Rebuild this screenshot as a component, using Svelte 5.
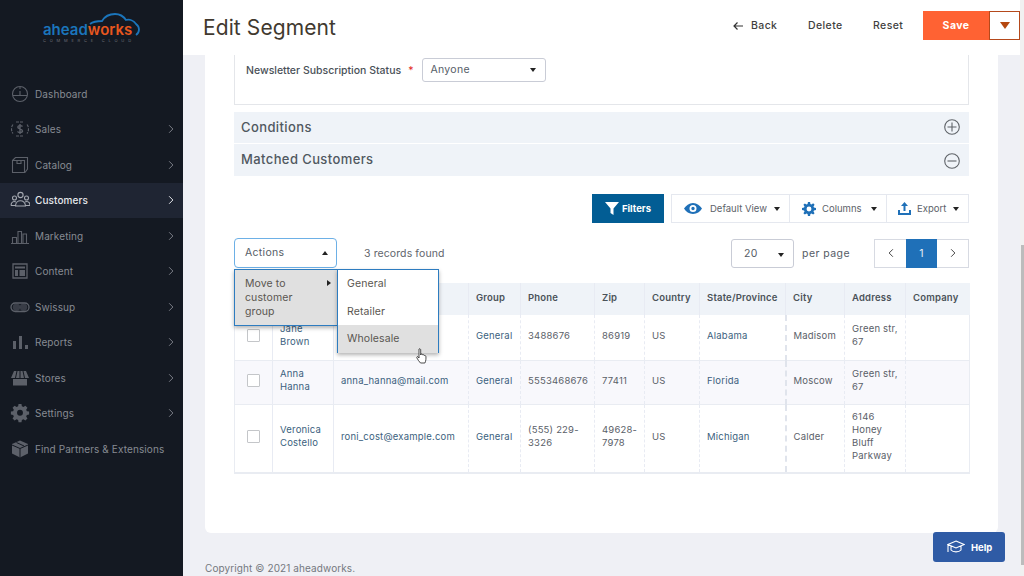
<script>
  const menu = [
    { name: 'Dashboard', icon: 'dash' },
    { name: 'Sales', icon: 'sales', more: true },
    { name: 'Catalog', icon: 'box', more: true },
    { name: 'Customers', icon: 'people', more: true, active: true },
    { name: 'Marketing', icon: 'bars', more: true },
    { name: 'Content', icon: 'content', more: true },
    { name: 'Swissup', icon: 'swiss', more: true },
    { name: 'Reports', icon: 'reports', more: true },
    { name: 'Stores', icon: 'store', more: true },
    { name: 'Settings', icon: 'gear', more: true },
    { name: 'Find Partners & Extensions', icon: 'brick' }
  ];

  const heads = ['', 'Name', 'Email', 'Group', 'Phone', 'Zip', 'Country', 'State/Province', 'City', 'Address', 'Company'];

  const rows = [
    { name: 'Jane Brown', email: '', phone: '3488676', zip: '86919', state: 'Alabama', city: 'Madisom', address: 'Green str, 67' },
    { name: 'Anna Hanna', email: 'anna_hanna@mail.com', phone: '5553468676', zip: '77411', state: 'Florida', city: 'Moscow', address: 'Green str, 67' },
    { name: 'Veronica Costello', email: 'roni_cost@example.com', phone: '(555) 229-3326', zip: '49628-7978', state: 'Michigan', city: 'Calder', address: '6146 Honey Bluff Parkway' }
  ];
</script>

{#snippet chevron(dir)}
  <svg class="chev" width="6" height="10" viewBox="0 0 8 12">
    <path d={dir === 'left' ? 'M6.500 1 1.500 6l5 5' : 'M1.500 1l5 5-5 5'} fill="none" stroke="currentColor" stroke-width="1.300" />
  </svg>
{/snippet}

{#snippet navIcon(kind)}
  <svg class="nav-icon" width="20" height="20" viewBox="0 0 20 20" fill="none" stroke="currentColor" stroke-width="1.100">
    {#if kind === 'dash'}
      <circle cx="10" cy="10" r="7.500" />
      <path d="M2.800 11.500h14.400M10 3v2M10 7v5" />
    {:else if kind === 'sales'}
      <path d="M3 5.500C1 8 1 12 3 14.500M17 5.500c2 2.500 2 6.500 0 9M6 3h8M6 17h8" stroke-dasharray="3 1" />
      <path d="M12.500 7.500C12 6.500 8 6 7.800 8c-.2 2.200 4.700 1.500 4.700 4 0 2-4.200 1.800-5 .5M10 5v10" stroke-width="1.400" />
    {:else if kind === 'box'}
      <path d="M2.500 5.500h12v12h-12zM2.500 5.500l3-3h12v11.500l-2.500 3.500M7 5.500v3h4v-3" />
    {:else if kind === 'people'}
      <circle cx="10.500" cy="5" r="2.600" />
      <circle cx="4.500" cy="8" r="2" />
      <circle cx="16.500" cy="8" r="2" />
      <path d="M5.500 16c0-7 10-7 10 0zM1 15.500c0-4 3-4.500 5-3.500M20 15.500c0-4-3-4.500-5-3.500M1 15.500h4.500M15.500 15.500H20" />
    {:else if kind === 'bars'}
      <path d="M1 17.500h18M2.500 17v-5.500h4V17M8 17V5.500h3.500V17M13 17V8h3.500v9" />
    {:else if kind === 'content'}
      <path d="M3 3h14v14H3z" stroke-width="1.300" />
      <path d="M5 5.500h10v2H5zM5 9h3v6H5zM9.500 9H15v6H9.500z" fill="currentColor" stroke="none" />
    {:else if kind === 'swiss'}
      <rect x="1" y="6" width="18" height="8.500" rx="4.200" stroke-width="1.300" />
      <circle cx="6.500" cy="10.200" r="3.700" fill="currentColor" fill-opacity="0.5" stroke="none" />
      <circle cx="13.500" cy="10.200" r="3.700" fill="currentColor" fill-opacity="0.5" stroke="none" />
    {:else if kind === 'reports'}
      <path d="M3 9h3v8H3zM9 4h3v13H9zM15 13h3v4h-3z" fill="currentColor" stroke="none" />
    {:else if kind === 'store'}
      <path d="M4 3h12l3 7H1zM3 11h14v6.500H3z" fill="currentColor" stroke="none" />
      <path d="M7 3 5.500 10M10 3v7M13 3l1.500 7" stroke="#141922" stroke-width="1" />
    {:else if kind === 'gear'}
      <path fill-rule="evenodd" d="M8.500 1.500h3l.4 2.300 1.600.7 2-1.300 2.100 2.100-1.300 2 .7 1.600 2.300.4v3l-2.300.4-.7 1.600 1.300 2-2.100 2.100-2-1.300-1.600.7-.4 2.300h-3l-.4-2.300-1.600-.7-2 1.300-2.100-2.100 1.300-2-.7-1.600-2.300-.4v-3l2.300-.4.7-1.600-1.300-2 2.100-2.100 2 1.300 1.600-.7zM10 7.500a3 3 0 1 0 0 6 3 3 0 0 0 0-6z" transform="translate(.2 -.5) scale(.98)" fill="currentColor" stroke="none" />
    {:else}
      <path d="M10 1.500 18 5v9.500L10 18.500 2 14.500V5z" fill="currentColor" stroke="none" />
      <path d="M2 6l8 3.500L18 6M10 9.500v9M6.500 3.500 14 7" stroke="#141922" stroke-width="1" />
    {/if}
  </svg>
{/snippet}

<div class="app">
  <aside class="side">
    <div class="logo">
      <svg class="cloud" width="54" height="26" viewBox="0 0 54 26" fill="none" stroke="#1b75bb" stroke-width="1.800">
        <path d="M2 12C6 9 10 9 14 9 17 4 22 2 27 2 32 2 36 5 38 8 42 7 46 9 48 12 52 15 52 20 48 23" />
      </svg>
      <div class="wordmark"><span class="ahead">ahead</span><span class="works">works</span></div>
      <div class="tagline">COMMERCE CLOUD</div>
    </div>
    <nav>
      {#each menu as item}
        <div class="nav-item" class:active={item.active}>
          {@render navIcon(item.icon)}
          <span class="nav-name">{item.name}</span>
          {#if item.more}{@render chevron('right')}{/if}
        </div>
      {/each}
    </nav>
  </aside>

  <div class="main">
    <header>
      <h1>Edit Segment</h1>
      <div class="head-actions">
        <span class="head-link back">
          <svg width="10" height="10" viewBox="0 0 10 10" fill="none" stroke="#333" stroke-width="1.200"><path d="M10 5H1M4.500 1.500 1 5l3.500 3.500" /></svg>
          Back
        </span>
        <span class="head-link delete">Delete</span>
        <span class="head-link reset">Reset</span>
        <div class="save-group">
          <span class="save">Save</span>
          <span class="save-arrow"><i></i></span>
        </div>
      </div>
    </header>

    <div class="page">
      <div class="card">
        <div class="form-box">
          <span class="field-label">Newsletter Subscription Status</span>
          <span class="req">*</span>
          <div class="select newsletter">Anyone<i class="caret"></i></div>
        </div>

        <div class="acc first">
          <span>Conditions</span>
          <svg width="16" height="16" viewBox="0 0 16 16" fill="none" stroke="#5f6368" stroke-width="1.100"><circle cx="8" cy="8" r="7.300" /><path d="M8 3.500v9M3.500 8h9" /></svg>
        </div>
        <div class="acc second">
          <span>Matched Customers</span>
          <svg width="16" height="16" viewBox="0 0 16 16" fill="none" stroke="#5f6368" stroke-width="1.100"><circle cx="8" cy="8" r="7.300" /><path d="M3.500 8h9" /></svg>
        </div>

        <div class="toolbar">
          <button class="filters">
            <svg width="14" height="13" viewBox="0 0 14 13"><path d="M0 0h14L8.500 6.500V13L5.500 11V6.500z" fill="#fff" /></svg>
            Filters
          </button>
          <div class="tool-group">
            <div class="tool view">
              <svg width="18" height="11" viewBox="0 0 18 11"><path fill-rule="evenodd" d="M9 0c4 0 7 2.500 9 5.500C16 8.500 13 11 9 11S2 8.500 0 5.500C2 2.500 5 0 9 0zm0 2a3.500 3.500 0 1 0 0 7 3.500 3.500 0 0 0 0-7zm0 1.800a1.700 1.700 0 1 1 0 3.400 1.700 1.700 0 0 1 0-3.400z" fill="#1f70b8" /></svg>
              <span>Default View</span><i class="caret"></i>
            </div>
            <div class="tool columns">
              <svg width="14" height="14" viewBox="0 0 20 20"><path fill-rule="evenodd" d="M8.500 0h3l.5 2.800 1.600.7 2.300-1.600 2.100 2.100-1.600 2.300.7 1.600 2.900.6v3l-2.900.5-.7 1.600 1.600 2.300-2.100 2.100-2.300-1.600-1.600.7-.5 2.900h-3L8 17.100l-1.600-.7-2.300 1.600L2 15.900l1.600-2.300-.7-1.600L0 11.500v-3L2.900 8l.7-1.600L2 4.100 4.100 2l2.300 1.600L8 2.900zM10 6.500a3.500 3.500 0 1 0 0 7 3.500 3.500 0 0 0 0-7z" fill="#1f70b8" /></svg>
              <span>Columns</span><i class="caret"></i>
            </div>
            <div class="tool export">
              <svg width="13" height="13" viewBox="0 0 13 13"><path d="M0 8h2v3h9V8h2v5H0zM6.500 0 10 4H7.500v5h-2V4H3z" fill="#1f70b8" /></svg>
              <span>Export</span><i class="caret"></i>
            </div>
          </div>
        </div>

        <div class="actions-row">
          <div class="actions-wrap">
            <div class="select actions">Actions<i class="caret up"></i></div>
            <div class="menu-left">
              <span>Move to customer group</span><i class="arrow-right"></i>
            </div>
            <div class="menu-right">
              <div class="opt">General</div>
              <div class="opt">Retailer</div>
              <div class="opt hover">Wholesale</div>
            </div>
            <svg class="cursor" width="12" height="17" viewBox="0 0 12 17">
              <path d="M3 1c.8-.6 1.700 0 1.700 1V7l.3-.9c.8-.3 1.500 0 1.600.7.800-.4 1.500 0 1.600.7.800-.3 1.600.1 1.700 1 .2 2 .1 4.200-1 6.500H4.500C3.300 13.500 1.800 12 .8 9.800c-.3-.8.500-1.500 1.200-1L3 10V2z" fill="#fff" stroke="#222" stroke-width=".8" />
            </svg>
          </div>
          <span class="found">3 records found</span>
          <div class="pager-side">
            <div class="select size">20<i class="caret"></i></div>
            <span class="per">per page</span>
            <div class="pager">
              <span class="pg">{@render chevron('left')}</span>
              <span class="pg current">1</span>
              <span class="pg">{@render chevron('right')}</span>
            </div>
          </div>
        </div>

        <table>
          <colgroup>
            <col style="width:38px" /><col style="width:61px" /><col style="width:135px" /><col style="width:52px" />
            <col style="width:74px" /><col style="width:50px" /><col style="width:55px" /><col style="width:86px" />
            <col style="width:59px" /><col style="width:61px" /><col style="width:64px" />
          </colgroup>
          <thead>
            <tr>{#each heads as h}<th>{h}</th>{/each}</tr>
          </thead>
          <tbody>
            {#each rows as r}
              <tr>
                <td class="check"><span class="box"></span></td>
                <td class="link">{r.name}</td>
                <td class="link">{r.email}</td>
                <td class="link">General</td>
                <td>{r.phone}</td>
                <td>{r.zip}</td>
                <td>US</td>
                <td class="link">{r.state}</td>
                <td>{r.city}</td>
                <td class="addr">{r.address}</td>
                <td></td>
              </tr>
            {/each}
          </tbody>
        </table>
      </div>
      <footer>Copyright © 2021 aheadworks.</footer>
      <div class="help">
        <svg width="18" height="16" viewBox="0 0 18 16" fill="none" stroke="#fff" stroke-width="1.100">
          <path d="M9 2 17 5.500 9 9 1 5.500zM4 7v4c2 2.500 8 2.500 10 0V7M1 5.500V13" />
        </svg>
        Help
      </div>
    </div>
  </div>

  <div class="scrollbar"><div class="thumb"></div></div>
</div>

<style>
  :global(body) {
    margin: 0;
    font-family: Inter, 'Open Sans', sans-serif;
  }

  .app {
    display: flex;
    height: 100vh;
    overflow: hidden;
    background: #eff0f5;
    color: #555c66;
  }

  .side {
    width: 183px;
    flex: none;
    background: #141922;
    color: #878b93;
  }

  .logo {
    position: relative;
    height: 76px;
    box-sizing: border-box;
    padding: 22px 0 0 43px;
  }

  .cloud {
    position: absolute;
    left: 88px;
    top: 12px;
  }

  .wordmark {
    position: relative;
    font-size: 15px;
    font-weight: 600;
    line-height: 16px;
  }

  .ahead { color: #1b75bb; }
  .works { color: #e8571e; }

  .tagline {
    font-size: 4px;
    line-height: 5px;
    letter-spacing: 3.800px;
    color: #6d7078;
    white-space: nowrap;
  }

  .nav-item {
    display: flex;
    align-items: center;
    height: 35.500px;
    padding: 0 9px 0 10px;
    font-size: 10px;
    letter-spacing: 0.1px;
  }

  .nav-item.active {
    background: #1f2533;
    color: #e6e8ec;
    font-weight: 500;
  }

  .nav-icon { flex: none; color: #5c6069; }
  .active .nav-icon { color: #a4a8b0; }
  .nav-item .chev { color: #7c8088; }
  .nav-item.active .chev { color: #e6e8ec; }

  .nav-name {
    flex: 1;
    margin-left: 5px;
    white-space: nowrap;
  }

  .main {
    flex: 1;
    min-width: 0;
    display: flex;
    flex-direction: column;
  }

  header {
    height: 55px;
    flex: none;
    background: #fff;
    display: flex;
    align-items: center;
    justify-content: space-between;
    padding-left: 20px;
  }

  h1 {
    margin: 0;
    font-size: 21px;
    font-weight: 400;
    color: #41392f;
    letter-spacing: 0.1px;
  }

  .head-actions {
    display: flex;
    align-items: center;
    margin-bottom: 4px;
    font-size: 10.500px;
    font-weight: 500;
    letter-spacing: 0.4px;
    color: #3f3f3f;
  }

  .head-link {
    display: flex;
    align-items: center;
    gap: 8px;
  }

  .back { width: 75px; }
  .delete { width: 65px; }
  .reset { width: 50px; }

  .save-group {
    display: flex;
    height: 29px;
  }

  .save {
    width: 66px;
    background: #ff6233;
    color: #fff;
    font-weight: 700;
    display: flex;
    align-items: center;
    justify-content: center;
  }

  .save-arrow {
    width: 29px;
    border: 1px solid #b5491b;
    background: #fff;
    display: flex;
    align-items: center;
    justify-content: center;
  }

  .save-arrow i {
    border-top: 7px solid #b5480f;
    border-left: 5px solid transparent;
    border-right: 5px solid transparent;
  }

  .page {
    flex: 1;
    position: relative;
    padding: 0 22px;
    min-height: 0;
  }

  .card {
    height: 478px;
    box-sizing: border-box;
    background: #fff;
    border-radius: 0 0 6px 6px;
    padding: 0 29px;
  }

  .form-box {
    height: 50px;
    box-sizing: border-box;
    border: 1px solid #e4e6ea;
    border-top: 0;
    padding: 3px 0 0 11px;
    display: flex;
    align-items: flex-start;
    font-size: 10.500px;
  }

  .field-label {
    font-weight: 500;
    line-height: 25px;
    letter-spacing: 0;
    color: #4a5158;
  }

  .req {
    color: #e22626;
    line-height: 25px;
    margin-left: 7px;
  }

  .select {
    position: relative;
    box-sizing: border-box;
    background: #fff;
    border: 1px solid #c9ccd6;
    border-radius: 3px;
    font-size: 10.500px;
    letter-spacing: 0.3px;
  }

  .caret {
    position: absolute;
    border-top: 4px solid #222;
    border-left: 3px solid transparent;
    border-right: 3px solid transparent;
  }

  .caret.up {
    border-top: 0;
    border-bottom: 4px solid #222;
  }

  .newsletter {
    margin-left: 9px;
    width: 124px;
    height: 24px;
    line-height: 22px;
    padding-left: 7px;
  }

  .newsletter .caret { right: 9px; top: 9px; }

  .acc {
    background: #eff3f8;
    display: flex;
    align-items: center;
    justify-content: space-between;
    padding: 0 9px 0 7px;
    font-size: 13px;
    font-weight: 500;
    letter-spacing: 0.4px;
    color: #505860;
  }

  .first { height: 31px; margin-top: 7px; }
  .second { height: 32px; margin-top: 1px; }
  .acc > span { margin-bottom: 2px; }
  .first svg { margin-bottom: 2px; }
  .second svg { margin-top: 2px; }

  .toolbar {
    display: flex;
    justify-content: flex-end;
    gap: 7px;
    height: 29px;
    margin-top: 18px;
  }

  .filters {
    width: 72px;
    border: 0;
    background: #025d94;
    color: #fff;
    font: 700 9.500px Inter, sans-serif;
    display: flex;
    align-items: center;
    justify-content: center;
    gap: 3px;
    padding: 0;
  }

  .tool-group {
    display: flex;
    border: 1px solid #e5e8ef;
    font-size: 9.500px;
    color: #5c6269;
  }

  .tool {
    position: relative;
    box-sizing: border-box;
    display: flex;
    align-items: center;
    border-right: 1px solid #e5e8ef;
  }

  .tool .caret { right: 9px; top: 12px; }

  .view { width: 118px; padding-left: 12px; gap: 8px; }
  .columns { width: 97px; padding-left: 12px; gap: 6px; }
  .export { width: 81px; padding-left: 11px; gap: 6px; border-right: 0; }

  .actions-row {
    display: flex;
    align-items: center;
    height: 30px;
    margin-top: 15px;
    font-size: 10.500px;
    letter-spacing: 0.1px;
  }

  .actions-wrap {
    position: relative;
    width: 103px;
  }

  .actions {
    width: 103px;
    height: 30px;
    line-height: 28px;
    padding-left: 10px;
    border-color: #6db0e6;
    border-radius: 4px;
    color: #555c66;
  }

  .actions .caret { right: 8px; top: 12px; }

  .menu-left {
    position: absolute;
    left: 0;
    top: 31px;
    box-sizing: border-box;
    width: 103px;
    height: 57px;
    background: #e0e0e0;
    border: 1px solid #2d7cc0;
    border-right: 0;
    box-shadow: 0 2px 4px rgba(0, 0, 0, 0.3);
    padding: 7px 26px 0 10px;
    line-height: 14px;
    color: #5a5650;
  }

  .arrow-right {
    position: absolute;
    right: 6px;
    top: 10px;
    border-left: 4px solid #222;
    border-top: 3px solid transparent;
    border-bottom: 3px solid transparent;
  }

  .menu-right {
    position: absolute;
    left: 103px;
    top: 31px;
    box-sizing: border-box;
    width: 102px;
    height: 84px;
    background: #fff;
    border: 1px solid #2d7cc0;
    box-shadow: 0 2px 4px rgba(0, 0, 0, 0.3);
  }

  .opt {
    height: 27.500px;
    line-height: 27px;
    padding-left: 9px;
    color: #5a5650;
  }

  .opt.hover { background: #e0e0e0; }

  .cursor {
    position: absolute;
    left: 182px;
    top: 110px;
  }

  .found {
    margin-left: 27px;
    color: #5f656c;
  }

  .pager-side {
    margin-left: auto;
    display: flex;
    align-items: center;
  }

  .size {
    width: 63px;
    height: 29px;
    line-height: 27px;
    padding-left: 12px;
  }

  .size .caret { right: 9px; top: 13px; }

  .per {
    margin-left: 8px;
    width: 72px;
    letter-spacing: 0.450px;
  }

  .pager {
    display: flex;
    height: 29px;
    box-sizing: border-box;
    border: 1px solid #d7dae2;
    color: #444;
    width: 95px;
  }

  .pg {
    flex: 1;
    display: flex;
    align-items: center;
    justify-content: center;
  }

  .pg.current {
    background: #1f70b8;
    color: #e9f0f7;
    height: 29px;
    margin-top: -1px;
  }

  table {
    width: 735px;
    table-layout: fixed;
    border-collapse: collapse;
    margin-top: 15px;
    font-size: 9.500px;
    line-height: 13px;
    border-bottom: 2px solid #e9ecf2;
  }

  th {
    height: 32px;
    box-sizing: border-box;
    background: #eff3f8;
    font-size: 9.500px;
    font-weight: 600;
    letter-spacing: 0.2px;
    text-align: left;
    white-space: nowrap;
    color: #4b5259;
    padding: 0 0 4px 7px;
    border-right: 1px solid #e8ebf3;
  }

  th:last-child, td:last-child { border-right: 0; }

  td {
    padding: 0 6px 4px 7px;
    border-right: 1px dashed #e8ebf3;
    border-bottom: 1px solid #e9ecf2;
    letter-spacing: 0.2px;
    color: #5a6068;
  }

  tbody tr:nth-child(1) { height: 45px; }
  tbody tr:nth-child(2) { height: 44px; background: #f8f8fc; }
  tbody tr:nth-child(3) { height: 69px; }

  td:first-child, td:nth-child(2) { border-right: 1px solid #e8ebf3; }
  td:nth-child(8) { border-right: 2px dashed #e0e4ec; }
  td:first-child { border-left: 1px solid #e9ecf2; }
  td:last-child { border-right: 1px solid #e9ecf2; }

  .link { color: #3b5f7e; }

  td.addr { padding-right: 0; }

  td.check { padding: 0 0 4px 12px; }

  .box {
    display: block;
    width: 11px;
    height: 11px;
    border: 1px solid #c4c6c9;
    border-radius: 1px;
    background: #fff;
  }

  footer {
    margin-top: 29px;
    font-size: 10px;
    line-height: 13px;
    letter-spacing: 0.1px;
    color: #74787e;
  }

  .help {
    position: absolute;
    right: 15px;
    top: 477px;
    width: 72px;
    height: 30px;
    box-sizing: border-box;
    padding-left: 14px;
    display: flex;
    align-items: center;
    gap: 6px;
    background: #2f5ba5;
    border-radius: 3px;
    color: #fff;
    font-size: 9.500px;
    font-weight: 700;
  }

  .scrollbar {
    width: 4px;
    flex: none;
    box-sizing: border-box;
    padding: 245px 0 11px 1px;
    background: #f1f1f1;
  }

  .thumb {
    height: 100%;
    background: #bcbcbc;
  }
</style>
